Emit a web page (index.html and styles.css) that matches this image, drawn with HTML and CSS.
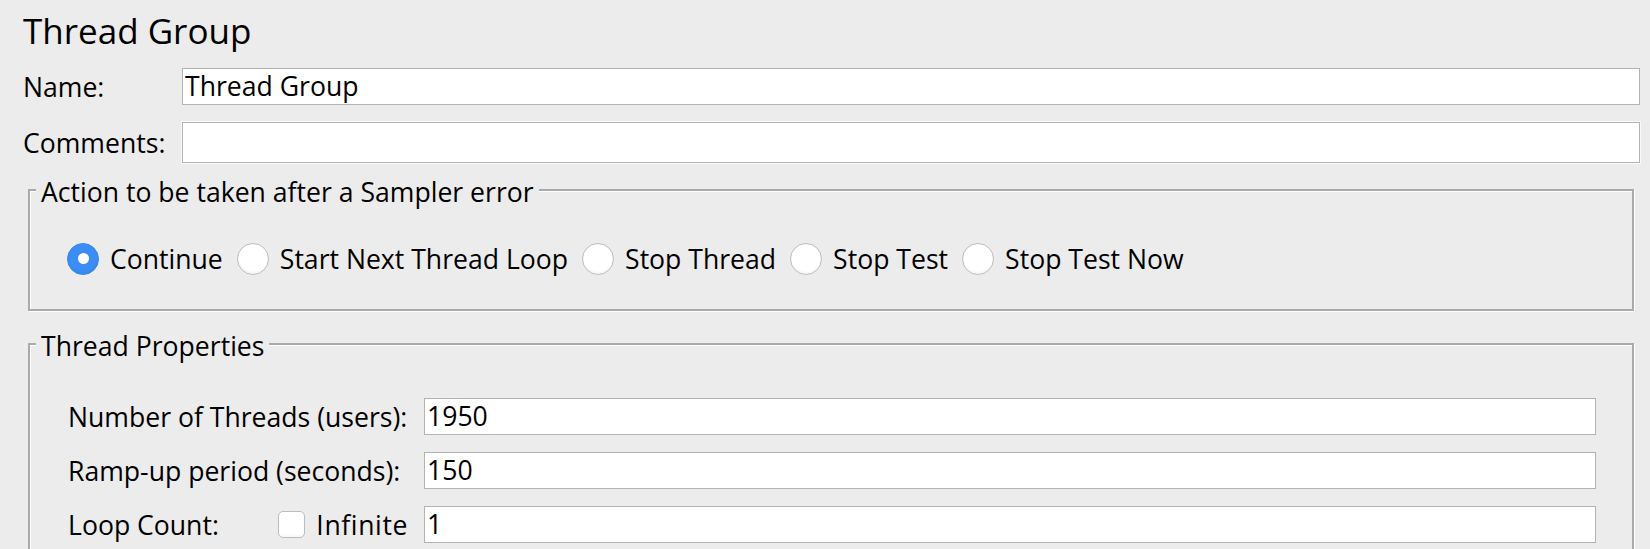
FILE: index.html
```html
<!DOCTYPE html>
<html lang="en">
<head>
<meta charset="utf-8">
<title>Thread Group</title>
<link rel="stylesheet" href="styles.css">
</head>
<body>
<div class="page">
  <h1 class="title">Thread Group</h1>

  <div class="row name-row">
    <span class="lbl">Name:</span>
    <div class="field">Thread Group</div>
  </div>

  <div class="row comments-row">
    <span class="lbl">Comments:</span>
    <div class="field tall"></div>
  </div>

  <fieldset class="group group-action">
    <legend>Action to be taken after a Sampler error</legend>
    <div class="radios">
      <span class="radio-item"><span class="radio on"></span>Continue</span>
      <span class="radio-item"><span class="radio"></span>Start Next Thread Loop</span>
      <span class="radio-item"><span class="radio"></span>Stop Thread</span>
      <span class="radio-item"><span class="radio"></span>Stop Test</span>
      <span class="radio-item"><span class="radio"></span>Stop Test Now</span>
    </div>
  </fieldset>

  <fieldset class="group group-props">
    <legend>Thread Properties</legend>
    <div class="props">
      <span class="plabel">Number of Threads (users):</span>
      <div class="field">1950</div>
      <span class="plabel">Ramp-up period (seconds):</span>
      <div class="field">150</div>
      <span class="plabel loop">
        <span>Loop Count:</span>
        <span class="infinite"><span class="check"></span><span class="inf-text">Infinite</span></span>
      </span>
      <div class="field">1</div>
    </div>
  </fieldset>
</div>
</body>
</html>
```

FILE: styles.css
```css
html, body {
  margin: 0;
  padding: 0;
  overflow: hidden;
  background: #ececec;
}

body {
  font-family: "Open Sans", "DejaVu Sans", sans-serif;
  font-size: 26.6px;
  color: #000;
}

.page {
  padding: 0 10px 0 23px;
}

.title {
  margin: 0;
  padding-top: 11px;
  font-size: 35px;
  line-height: 40px;
  font-weight: 400;
}

.row {
  display: flex;
  align-items: center;
  margin-top: 17px;
}

.lbl {
  width: 159px;
  flex: none;
  white-space: nowrap;
}

.field {
  flex: 1;
  box-sizing: border-box;
  height: 37px;
  line-height: 35px;
  padding: 0 2px;
  background: #fff;
  border: 1px solid #b3b3b3;
  white-space: nowrap;
}

.field.tall {
  height: 41px;
  box-shadow: 0 0 0 1px #fafafa;
}

.group {
  margin: 10px 6px 0 5px;
  padding: 0;
  border: 2px solid #aaaaaa;
  box-shadow: inset 1px 1px 0 #fff, 1px 1px 0 #fff;
}

.group legend {
  margin-left: 6px;
  padding: 4px 5px 0;
  line-height: 30px;
  background: #ececec;
}

.radios {
  display: flex;
  align-items: center;
  gap: 14px;
  margin: 36px 0 34px 37px;
  height: 32px;
}

.radio-item {
  display: flex;
  align-items: center;
  gap: 11px;
  line-height: 32px;
  white-space: nowrap;
}

.radio {
  position: relative;
  box-sizing: border-box;
  width: 32px;
  height: 32px;
  border-radius: 50%;
  background: #fff;
  border: 1px solid #bdbdbd;
  box-shadow: inset 0 -2px 2px rgba(0, 0, 0, 0.04);
}

.radio.on {
  background: #3b8df5;
  border-color: #3a88ee;
}

.radio.on::after {
  content: "";
  position: absolute;
  left: 50%;
  top: 50%;
  width: 11px;
  height: 11px;
  margin: -6px 0 0 -5.5px;
  border-radius: 50%;
  background: #fff;
}

.group-props {
  margin-top: 16px;
}

.props {
  display: grid;
  grid-template-columns: 340px 1fr;
  column-gap: 16px;
  row-gap: 17px;
  align-items: center;
  margin: 37px 36px 40px 38px;
}

.plabel {
  white-space: nowrap;
}

.plabel.loop {
  display: flex;
  justify-content: space-between;
  align-items: center;
}

.infinite {
  display: flex;
  align-items: center;
  gap: 11px;
}

.inf-text {
  letter-spacing: 0.6px;
}

.check {
  box-sizing: border-box;
  width: 27px;
  height: 27px;
  border-radius: 5px;
  background: #fff;
  border: 1px solid #bcbcbc;
  box-shadow: inset 0 -2px 2px rgba(0, 0, 0, 0.03);
}
```
